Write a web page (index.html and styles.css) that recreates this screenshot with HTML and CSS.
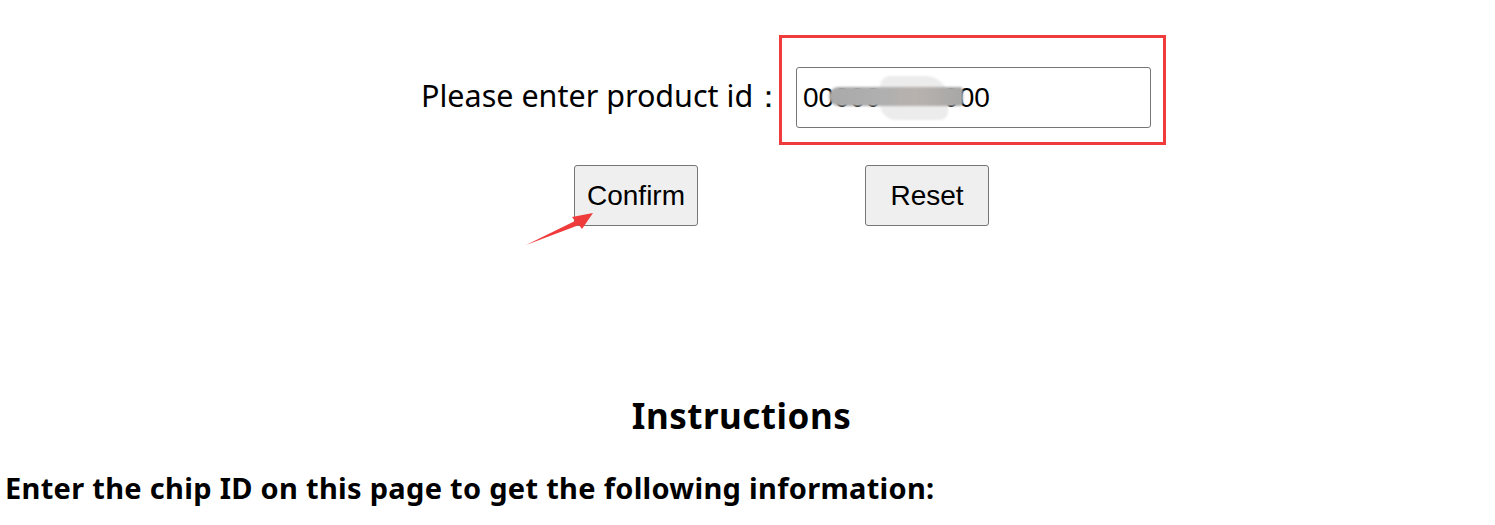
FILE: index.html
```html
<!DOCTYPE html>
<html>
<head>
<meta charset="utf-8">
<link rel="stylesheet" href="styles.css">
</head>
<body>
<div class="form">
  <div class="row">
    <label class="label" for="pid">Please enter product id：</label>
    <div class="field">
      <input id="pid" class="input" type="text" value="000000000000">
      <span class="halo"></span>
      <span class="smudge"></span>
      <span class="highlight"></span>
    </div>
  </div>
  <div class="buttons">
    <div class="btnwrap">
      <button class="btn">Confirm</button>
      <svg class="arrow" width="80" height="40" viewBox="0 0 80 40">
        <path d="M1 35 L50 11 L47 7 L68 3 L57 19 L54 15 Z" fill="#ef3b3b"/>
      </svg>
    </div>
    <button class="btn">Reset</button>
  </div>
</div>
<h1 class="title">Instructions</h1>
<h3 class="intro">Enter the chip ID on this page to get the following information:</h3>
</body>
</html>
```
FILE: styles.css
```css
html, body {
  margin: 0;
  padding: 0;
  background: #fff;
}
body {
  font-family: "Noto Sans", "Liberation Sans", sans-serif;
  color: #000;
}
.form {
  margin-left: 419px;
  padding-top: 67px;
  width: 732px;
}
.row {
  display: flex;
  align-items: center;
  gap: 21px;
}
.label {
  font-size: 30.5px;
  white-space: nowrap;
  width: 356px;
  padding-left: 2px;
  padding-bottom: 3px;
  box-sizing: border-box;
}
.field {
  position: relative;
}
.input {
  display: block;
  box-sizing: border-box;
  width: 355px;
  height: 61px;
  margin: 0;
  border: 1px solid #767676;
  border-radius: 3px;
  padding: 0 6px;
  font-family: "Liberation Sans", Arial, sans-serif;
  font-size: 28px;
  color: #000;
}
.halo {
  position: absolute;
  left: 84px;
  top: 9px;
  width: 68px;
  height: 44px;
  background: #ececec;
  border-radius: 10px 22px 8px 16px;
  filter: blur(1px);
}
.smudge {
  position: absolute;
  left: 33px;
  top: 20px;
  width: 134px;
  height: 19px;
  background: linear-gradient(90deg, #a9a9a9 0%, #b0b0b0 40%, #b8b2ae 65%, #a7a7a7 100%);
  border-radius: 10px 4px 4px 10px;
  filter: blur(1px);
}
.highlight {
  position: absolute;
  left: -17px;
  top: -32px;
  width: 381px;
  height: 104px;
  border: 3px solid #ef3b3b;
  pointer-events: none;
}
.buttons {
  display: flex;
  margin-top: 37px;
  margin-left: 155px;
  gap: 167px;
}
.btnwrap {
  position: relative;
}
.btn {
  box-sizing: border-box;
  width: 124px;
  height: 61px;
  background: #efefef;
  border: 1px solid #767676;
  border-radius: 3px;
  font-family: "Liberation Sans", Arial, sans-serif;
  font-size: 28px;
  color: #000;
  padding: 0;
}
.arrow {
  position: absolute;
  left: -49px;
  top: 45px;
}
.title {
  margin: 170px 0 0 0;
  padding-right: 12px;
  text-align: center;
  font-size: 35px;
  letter-spacing: 0.5px;
  font-weight: bold;
  line-height: 40px;
}
.intro {
  margin: 34px 0 0 5px;
  font-size: 29px;
  letter-spacing: 0.3px;
  font-weight: bold;
  line-height: 36px;
}
```
